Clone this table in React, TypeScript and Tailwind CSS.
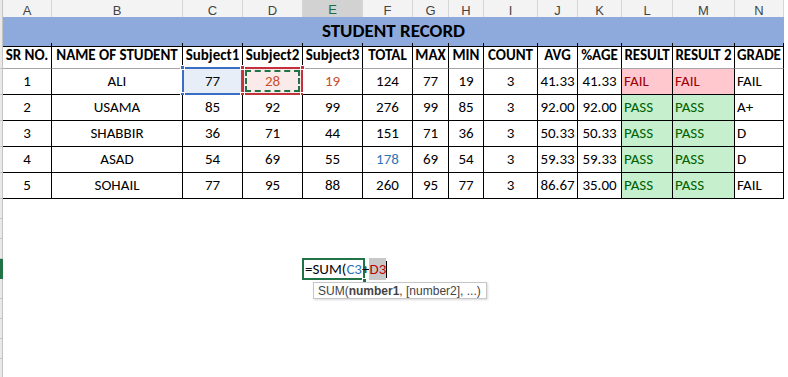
import React from 'react';

const GRID = 'grid grid-cols-[3px_49px_131px_60px_60px_60px_50px_36px_35px_54px_40px_44px_51px_62px_49px]';
const SHEET_FONT = { fontFamily: 'Carlito, Lato, "Liberation Sans", sans-serif' };

const LETTERS = ['A', 'B', 'C', 'D', 'E', 'F', 'G', 'H', 'I', 'J', 'K', 'L', 'M', 'N'];
const HEADERS = ['SR NO.', 'NAME OF STUDENT', 'Subject1', 'Subject2', 'Subject3', 'TOTAL', 'MAX', 'MIN', 'COUNT', 'AVG', '%AGE', 'RESULT', 'RESULT 2', 'GRADE'];

const ROWS = [
  ['1', 'ALI', '77', '28', '19', '124', '77', '19', '3', '41.33', '41.33', 'FAIL', 'FAIL', 'FAIL'],
  ['2', 'USAMA', '85', '92', '99', '276', '99', '85', '3', '92.00', '92.00', 'PASS', 'PASS', 'A+'],
  ['3', 'SHABBIR', '36', '71', '44', '151', '71', '36', '3', '50.33', '50.33', 'PASS', 'PASS', 'D'],
  ['4', 'ASAD', '54', '69', '55', '178', '69', '54', '3', '59.33', '59.33', 'PASS', 'PASS', 'D'],
  ['5', 'SOHAIL', '77', '95', '88', '260', '95', '77', '3', '86.67', '35.00', 'PASS', 'PASS', 'FAIL'],
];

function Sliver({ active = false, tall = false }: { active?: boolean; tall?: boolean }) {
  if (active) return <div className="bg-[#217346]" />;
  return <div className={`bg-[#e9e9e9] border-r border-b border-[#c4c4c4] ${tall ? '' : ''}`} />;
}

function Handle({ className, color }: { className: string; color: string }) {
  return <span className={`absolute w-[5px] h-[5px] border border-white ${color} ${className}`} />;
}

function DataCell({ row, col, value }: { row: number; col: number; value: string }) {
  const isResult = col === 11 || col === 12;
  const fail = value === 'FAIL';
  let bg = 'bg-white';
  let color = 'text-black';
  let align = 'justify-center';
  if (isResult) {
    bg = fail ? 'bg-[#ffc7ce]' : 'bg-[#c6efce]';
    color = fail ? 'text-[#9c0006]' : 'text-[#006100]';
    align = 'justify-start pl-[2px]';
  }
  if (col === 13) align = 'justify-start pl-[2px]';
  if (row === 0 && col === 2) bg = 'bg-[#e8eef8]';
  if (row === 0 && col === 3) bg = 'bg-[#fbeaea]';
  if (row === 0 && (col === 3 || col === 4)) color = 'text-[#c8502c]';
  if (row === 3 && col === 5) color = 'text-[#2e75b6]';

  return (
    <div className={`relative flex items-center ${align} ${bg} ${color} border-r border-b border-black text-[15px] whitespace-nowrap`}>
      {value}
      {row === 0 && col === 2 && (
        <div className="absolute -left-[1px] -top-[2px] -right-[1px] -bottom-[1px] border-2 border-[#3a6ec4]">
          <Handle color="bg-[#3a6ec4]" className="-left-[4px] -top-[4px]" />
          <Handle color="bg-[#3a6ec4]" className="-left-[4px] -bottom-[4px]" />
        </div>
      )}
      {row === 0 && col === 3 && (
        <div className="absolute -left-[1px] -top-[2px] -right-[1px] -bottom-[1px] border-2 border-[#c4313d]">
          <div className="absolute inset-[1px] border-2 border-dashed border-[#217346]" />
          <Handle color="bg-[#c4313d]" className="-left-[4px] -top-[4px]" />
          <Handle color="bg-[#c4313d]" className="-right-[4px] -top-[4px]" />
          <Handle color="bg-[#c4313d]" className="-left-[4px] -bottom-[4px]" />
          <Handle color="bg-[#c4313d]" className="-right-[4px] -bottom-[4px]" />
        </div>
      )}
    </div>
  );
}

export default function App() {
  return (
    <div className="relative w-[788px] h-[377px] bg-white overflow-hidden text-black" style={SHEET_FONT}>
      {/* column letters */}
      <div className={`${GRID} h-[17px]`}>
        <div className="bg-[#e9e9e9] border-r border-b border-[#c4c4c4]" />
        {LETTERS.map((l) => (
          <div
            key={l}
            className={`flex items-center justify-center text-[13px] border-r border-[#d6d6d6] ${
              l === 'E' ? 'bg-[#d2d2d2] border-b-2 border-b-[#217346] text-[#1e6b41]' : 'bg-[#f3f3f3] border-b border-b-[#c4c4c4] text-[#444]'
            }`}
            style={{ fontFamily: '"Liberation Sans", sans-serif' }}
          >
            {l}
          </div>
        ))}
      </div>

      {/* title */}
      <div className={`${GRID} h-[26px]`}>
        <Sliver />
        <div className="col-span-14 flex items-center justify-center bg-[#8ea9db] border-b border-black text-[19px] font-bold">
          STUDENT RECORD
        </div>
      </div>

      {/* header row */}
      <div className={`${GRID} h-[26px]`}>
        <Sliver />
        {HEADERS.map((h) => (
          <div
            key={h}
            className="flex items-center justify-center border-r border-r-black border-b border-b-[#a6a6a6] text-[15px] font-bold whitespace-nowrap"
          >
            {h}
          </div>
        ))}
      </div>

      {/* data */}
      {ROWS.map((r, ri) => (
        <div key={ri} className={`${GRID} h-[26px]`}>
          <Sliver />
          {r.map((v, ci) => (
            <DataCell key={ci} row={ri} col={ci} value={v} />
          ))}
        </div>
      ))}

      {/* empty rows */}
      {Array.from({ length: 9 }).map((_, i) => (
        <div key={i} className={`${GRID} h-[20px]`}>
          <Sliver active={i === 3} />
        </div>
      ))}

      {/* cell editor */}
      <div className="absolute left-[302px] top-[258px] w-[63px] h-[22px] border-2 border-[#217346]" />
      <span className="absolute left-[362px] top-[278px] w-[5px] h-[5px] bg-[#217346] border border-white" />
      <div className="absolute left-[305px] top-[259px] h-[20px] flex items-center text-[15px] whitespace-nowrap">
        <span>=SUM(</span>
        <span className="text-[#2e75b6]">C3</span>
        <span>+</span>
        <span className="bg-[#c8c8c8] text-[#c00000]">D3</span>
        <span className="w-px h-[17px] bg-black" />
      </div>

      {/* function tooltip */}
      <div
        className="absolute left-[313px] top-[282px] w-[174px] h-[17px] flex items-center pl-[4px] bg-white border border-[#c6c6c6] text-[12px] text-[#444] shadow-[1px_1px_2px_rgba(0,0,0,0.15)] whitespace-nowrap"
        style={{ fontFamily: '"Liberation Sans", sans-serif' }}
      >
        SUM(<b className="font-bold">number1</b>, [number2], ...)
      </div>
    </div>
  );
}
